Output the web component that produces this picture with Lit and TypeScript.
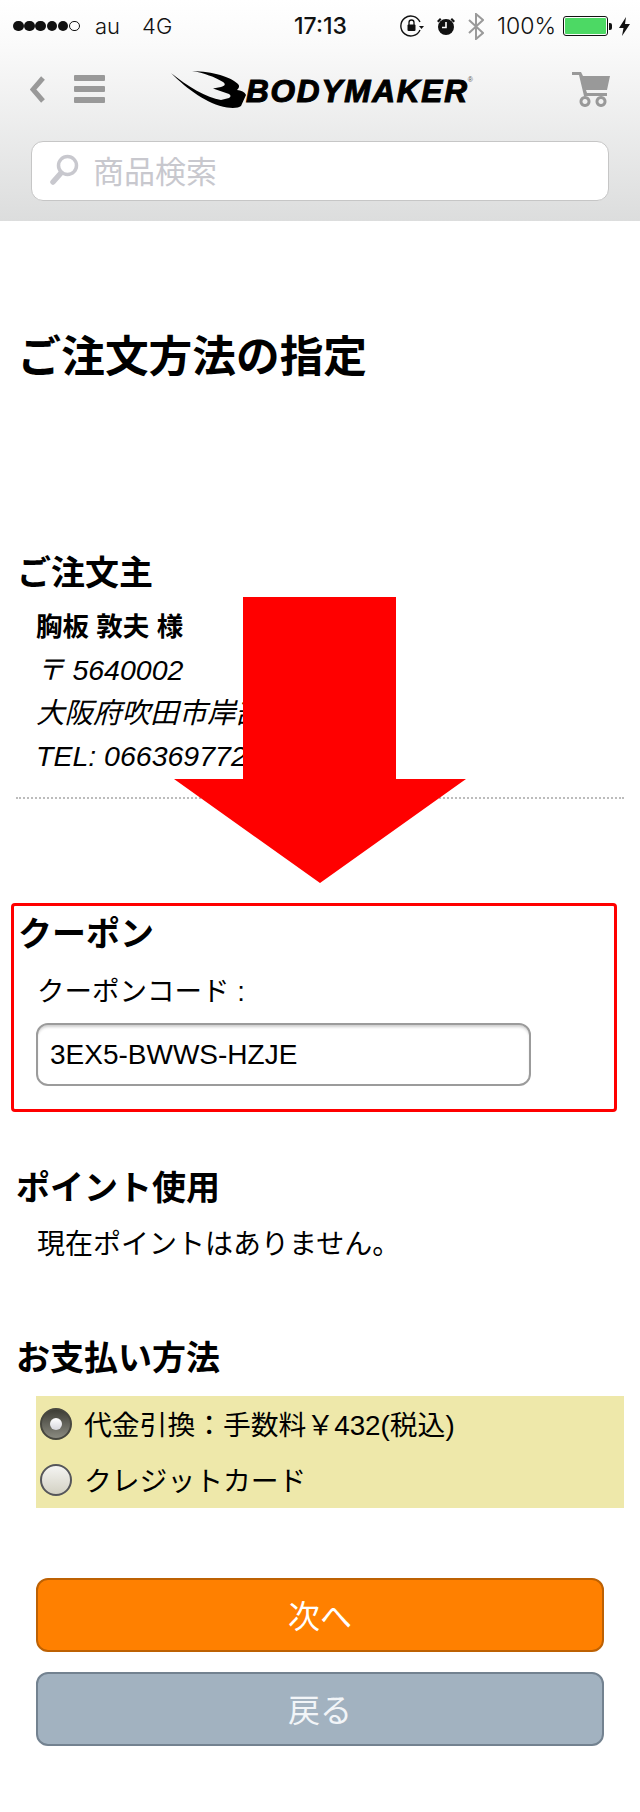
import { LitElement, html, css, svg } from "lit";
import { customElement } from "lit/decorators.js";

@customElement("app-root")
export class AppRoot extends LitElement {
  static styles = css`
    :host { display: block; position: relative; width: 640px; height: 1812px; overflow: hidden; background: #fff; color: #000; font-family: "Liberation Sans", "Noto Sans CJK JP", sans-serif; }
    .header { height: 221px; background: linear-gradient(#ffffff 0%, #fafafa 20%, #dcdddd 100%); display: flex; flex-direction: column; box-sizing: border-box; }
    .status { height: 52px; display: flex; align-items: center; padding: 0 10px 0 13px; font-family: Inter, "Liberation Sans", sans-serif; font-weight: 300; font-size: 22px; color: #111; position: relative; }
    .dots { display: flex; gap: 0.5px; width: 67px; }
    .dot { width: 10.7px; height: 10.7px; border-radius: 50%; background: #111; box-sizing: border-box; }
    .dot.off { background: none; border: 1px solid #111; }
    .carrier { margin-left: 15px; }
    .net { margin-left: 22px; }
    .time { position: absolute; left: 294px; font-size: 23px; font-weight: 500; }
    .status-right { margin-left: auto; display: flex; align-items: center; }
    .pct { margin: 0 0 0 12.5px; font-size: 23px; }
    .battery { margin-left: 7px; width: 45px; height: 20px; border: 1.5px solid #111; border-radius: 3px; box-sizing: border-box; padding: 1px; }
    .battery i { display: block; height: 100%; background: #4cd964; border-radius: 1px; }
    .nub { width: 3px; height: 7px; background: #111; margin-left: 1px; border-radius: 0 2px 2px 0; }
    .nav { height: 72px; display: flex; align-items: center; padding: 0 30px; margin-top: 1px; }
    .icon { display: block; flex: none; }
    .menu { margin-left: 29px; }
    .logo { display: flex; align-items: flex-end; margin-left: 66px; height: 40px; }
    .logo-text { font-size: 31.5px; line-height: 31px; font-weight: 700; font-style: italic; letter-spacing: 1.8px; -webkit-text-stroke: 1.1px #000; margin-left: -1px; padding-bottom: 2px; white-space: nowrap; }
    .logo-text sup { font-size: 7px; font-style: normal; font-weight: 400; -webkit-text-stroke: 0; vertical-align: 20px; line-height: 0; letter-spacing: 0; color: #555; margin-left: -1px; }
    .cart { margin-left: auto; }
    .search { margin: 16px 31px 0; height: 60px; background: #fff; border: 1px solid #c6c6c6; border-radius: 12px; box-sizing: border-box; display: flex; align-items: center; padding: 0 0 3px 18px; color: #c8c8ce; font-size: 31px; gap: 14px; }
    .main { display: flex; flex-direction: column; }
    h1 { margin: 106px 0 0 17.5px; font-size: 43.7px; line-height: 60px; font-weight: 700; }
    h2 { margin: 0; font-size: 34px; line-height: 40px; font-weight: 700; }
    .orderer { margin: 166px 0 0 17px; }
    .lines { margin: 13px 0 0 36px; font-size: 28.5px; line-height: 43px; }
    .lines b { display: block; font-size: 26.5px; }
    .lines i { display: block; white-space: nowrap; }
    .rule { margin: 19px 16px 0; border-top: 2px dotted #bcbcbc; }
    .coupon-h { margin: 115px 0 0 18px; }
    .label { margin: 18px 0 0 37px; font-size: 27.5px; line-height: 40px; }
    .field { margin: 11px 0 0 36px; width: 495px; height: 63px; box-sizing: border-box; border: 2px solid #9b9b9b; border-radius: 12px; font-size: 28px; display: flex; align-items: center; padding-left: 12px; box-shadow: inset 0 3px 3px -1px rgba(0,0,0,0.2); background: #fff; }
    .point-h { margin: 82px 0 0 16px; }
    .point-t { margin: 17px 0 0 37px; font-size: 28px; line-height: 40px; }
    .pay-h { margin: 73px 0 0 16px; }
    .pay { margin: 18px 16px 0 36px; height: 112px; background: #eee8aa; display: flex; flex-direction: column; font-size: 27.8px; padding: 12px 0 0 4px; box-sizing: border-box; gap: 24px; }
    .opt { display: flex; align-items: center; gap: 12px; height: 32px; white-space: nowrap; }
    .opt-t { padding-bottom: 3px; }
    .radio { width: 32px; height: 32px; border-radius: 50%; box-sizing: border-box; flex: none; border: 2px solid #55565a; background: linear-gradient(#f4f4f2, #d3d1c3); display: flex; align-items: center; justify-content: center; }
    .radio.on { border-color: #47473f; background: linear-gradient(#3e3e36, #8a8a80); }
    .radio.on i { display: block; width: 12px; height: 12px; border-radius: 50%; background: linear-gradient(#fff, #d6d6dc); }
    .btn { margin: 0 0 0 36px; width: 568px; height: 74px; box-sizing: border-box; border-radius: 12px; border: 2px solid; display: flex; align-items: center; justify-content: center; font-size: 32px; padding-bottom: 3px; color: #fff; }
    .next { margin-top: 70px; background: #ff8000; border-color: #bd6103; }
    .back { margin-top: 20px; background: #a2b2c0; border-color: #738290; color: #f2f5f8; }
    .arrow { position: absolute; left: 174px; top: 597px; }
    .redbox { position: absolute; left: 11px; top: 903px; width: 600px; height: 203px; border: 3px solid #f00; border-radius: 4px; }
  `;

  render() {
    return html`
      <div class="header">
        <div class="status">
          <div class="dots">${[1,1,1,1,1,0].map(d => html`<span class="dot ${d ? "" : "off"}"></span>`)}</div>
          <span class="carrier">au</span><span class="net">4G</span>
          <span class="time">17:13</span>
          <div class="status-right">
            <svg class="icon" width="24" height="24" viewBox="0 0 24 24" fill="none" stroke="#111" stroke-width="1.4">
              <path d="M20 8A10 10 0 1 0 20 16"/><path d="M19 12h5l-2.5 3z" fill="#111" stroke="none"/>
              <rect x="7.5" y="10.5" width="8" height="6.5" rx="1" fill="#111" stroke="none"/><path d="M9 11V8.5a2.5 2.5 0 0 1 5 0V11" stroke-width="1.3"/>
            </svg>
            <svg class="icon" style="margin-left:12px" width="20" height="20" viewBox="0 0 20 20">
              <circle cx="10" cy="11" r="8" fill="#111"/><path d="M10 6v5.5H6" stroke="#fff" stroke-width="1.6" fill="none"/>
              <path d="M1 5l3-3 1.5 1.5-3 3zM19 5l-3-3-1.5 1.5 3 3z" fill="#111"/>
            </svg>
            <svg class="icon" style="margin-left:12px" width="16" height="27" viewBox="0 0 16 27" fill="none" stroke="#9a9a9a" stroke-width="2">
              <path d="M1 7l14 13-7 6V1l7 6L1 20"/>
            </svg>
            <span class="pct">100%</span>
            <div class="battery"><i></i></div><div class="nub"></div>
            <svg class="icon" style="margin-left:7px" width="11" height="19" viewBox="0 0 11 19"><path d="M7 0L0 11h4.5L3 19l8-12H6z" fill="#111"/></svg>
          </div>
        </div>
        <div class="nav">
          <svg class="icon" width="15" height="27" viewBox="0 0 15 27"><path d="M13 2L3 13.5 13 25" fill="none" stroke="#999" stroke-width="5"/></svg>
          <svg class="icon menu" width="31" height="28" viewBox="0 0 31 28" fill="#999"><rect width="31" height="6" rx="1"/><rect y="11" width="31" height="6" rx="1"/><rect y="22" width="31" height="6" rx="1"/></svg>
          <div class="logo">
            <svg class="icon" width="76" height="40" viewBox="170 68 76 40">${svg`<path fill="#000" d="M170 72C186 88 206 103 226 106.5C232 107.5 238 107 240 105L245 94C244 91 240 89.5 236 89C238 87 239 85 237 83C230 76 212 70.5 191 70C203 72 214 76 222 81C225 83 224 85 220 86L212 87.5L228 93C230 94 230 96 228 97L220 99C206 97 186 85 170 72Z"/>`}</svg>
            <span class="logo-text">BODYMAKER<sup>®</sup></span>
          </div>
          <svg class="icon cart" width="38" height="35" viewBox="0 0 38 35" fill="#999">
            <path d="M0 0h9l2 4h27l-3 14H14l1 3h20v3H12L7 3H0z"/>
            <path fill-rule="evenodd" d="M13 24a5.5 5.5 0 1 0 .01 0zM13 27a2.5 2.5 0 1 1-.01 0zM29 24a5.5 5.5 0 1 0 .01 0zM29 27a2.5 2.5 0 1 1-.01 0z"/>
          </svg>
        </div>
        <div class="search">
          <svg class="icon" width="29" height="31" viewBox="0 0 29 31" fill="none" stroke="#c8c8ce">
            <circle cx="17.5" cy="11.5" r="9" stroke-width="3.5"/><path d="M11 19L3 28" stroke-width="5.5" stroke-linecap="round"/>
          </svg>
          <span>商品検索</span>
        </div>
      </div>
      <div class="main">
        <h1>ご注文方法の指定</h1>
        <h2 class="orderer">ご注文主</h2>
        <div class="lines">
          <b>胸板 敦夫 様</b>
          <i>〒 5640002</i>
          <i>大阪府吹田市岸部</i>
          <i>TEL: 066369772</i>
        </div>
        <div class="rule"></div>
        <h2 class="coupon-h">クーポン</h2>
        <div class="label">クーポンコード :</div>
        <div class="field">3EX5-BWWS-HZJE</div>
        <h2 class="point-h">ポイント使用</h2>
        <div class="point-t">現在ポイントはありません。</div>
        <h2 class="pay-h">お支払い方法</h2>
        <div class="pay">
          <div class="opt"><span class="radio on"><i></i></span><span class="opt-t">代金引換：手数料￥432(税込)</span></div>
          <div class="opt"><span class="radio"></span><span class="opt-t">クレジットカード</span></div>
        </div>
        <div class="btn next">次へ</div>
        <div class="btn back">戻る</div>
      </div>
      <svg class="arrow" width="292" height="286" viewBox="0 0 292 286"><path d="M69 0H222V182H292L146 286 0 182H69Z" fill="#f00"/></svg>
      <div class="redbox"></div>
    `;
  }
}
